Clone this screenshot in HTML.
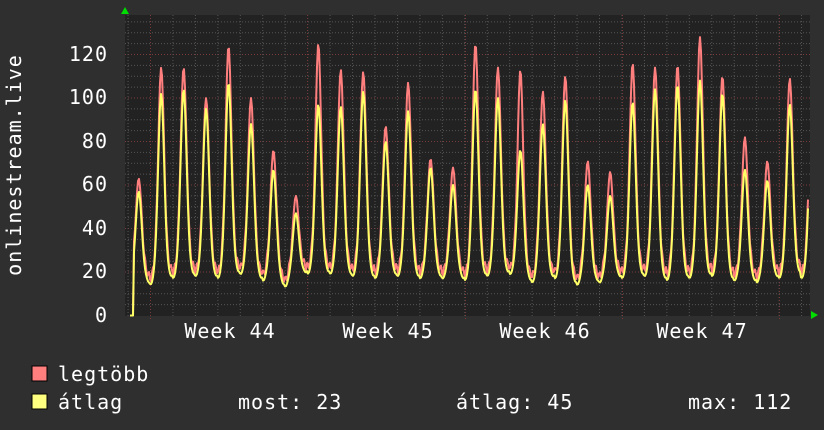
<!DOCTYPE html>
<html><head><meta charset="utf-8"><style>
html,body{margin:0;padding:0;background:#2f2f2f;width:824px;height:430px;overflow:hidden}
svg{display:block}
text{font-family:"DejaVu Sans Mono","Liberation Mono",monospace;fill:#fff;letter-spacing:1px}
</style></head><body>
<svg id="g" width="824" height="430" xmlns="http://www.w3.org/2000/svg">
<rect x="0" y="0" width="824" height="430" fill="#2f2f2f"/>
<rect x="125" y="15" width="685" height="301" fill="#222"/>
<g id="grid"></g>
<polyline id="red" fill="none" stroke="#ff7f7f" stroke-width="2" stroke-linejoin="round"/>
<polyline id="yel" fill="none" stroke="#ffff66" stroke-width="2" stroke-linejoin="round"/>
<polygon points="121,14 125,7 129,14" fill="#00dd00"/>
<polygon points="811,311 818,315 811,319" fill="#00dd00"/>
<g font-size="20" text-anchor="end">
<text x="108" y="61">120</text><text x="108" y="104">100</text><text x="108" y="148">80</text>
<text x="108" y="191">60</text><text x="108" y="235">40</text><text x="108" y="278">20</text>
<text x="108" y="322">0</text>
</g>
<text font-size="20" transform="translate(21,165) rotate(-90)" text-anchor="middle">onlinestream.live</text>
<g font-size="20" text-anchor="middle">
<text x="230" y="338">Week 44</text><text x="388" y="338">Week 45</text>
<text x="545" y="338">Week 46</text><text x="702" y="338">Week 47</text>
</g>
<rect x="32" y="366" width="15" height="15" fill="#ff7f7f" stroke="#000"/>
<rect x="32" y="394" width="15" height="15" fill="#ffff7f" stroke="#000"/>
<g font-size="20">
<text x="58" y="381">legtöbb</text>
<text x="58" y="409">átlag</text>
<text x="238" y="409">most: 23</text>
<text x="456" y="409">átlag: 45</text>
<text x="688" y="409">max: 112</text>
</g>
</svg>
<script>
var ns="http://www.w3.org/2000/svg",g=document.getElementById("grid");
function ln(x1,y1,x2,y2,c){var l=document.createElementNS(ns,"line");l.setAttribute("x1",x1);l.setAttribute("y1",y1);l.setAttribute("x2",x2);l.setAttribute("y2",y2);l.setAttribute("stroke",c);l.setAttribute("stroke-width","1");l.setAttribute("stroke-dasharray","1,2");g.appendChild(l);}
function Y(v){return 315.5-v*2.175;}
for(var v=5;v<=135;v+=5){ln(125,Y(v),810,Y(v),v%20==0?"#7a3a3a":"#555");}
for(var x=150.5-22.45*1;x<810;x+=22.45){if(x>125)ln(x,15,x,316,"#555");}
[150.5,307.5,465.5,622.5,779.5].forEach(function(x){ln(x,15,x,319,"#7a3a3a");});
var pk=[[60,57],[111,102],[111,104],[97,95],[121,107],[97,88],[73,67],[52,47],[122,97],[110,96],[109,103],[84,80],[104,94],[69,68],[65,60],[122,104],[111,100],[110,76],[100,88],[107,99],[68,60],[63,55],[113,98],[111,104],[112,106],[125,108],[107,102],[79,67],[68,62],[106,97]];
var bases=[18,17,20,21,20,22,19,16,22,22,21,20,21,20,20,19,21,22,18,20,17,18,20,21,19,20,21,19,18,20,22];
var r=[],y=[],x0=127.5,d=22.45;
for(var px=130;px<=808;px+=1){
 var t=(px-x0)/d, i=Math.floor(t), f=t-i;
 if(i>=pk.length)i=pk.length-1;
 var p=pk[i];
 var s=Math.exp(-Math.pow((f-0.5)/0.19,2));
 var s2=Math.exp(-Math.pow((f-0.5)/0.15,2));
 var bA=bases[i]*(1-f)+bases[i+1]*f-3*Math.exp(-Math.pow((f-0.05)/0.12,2))-2*Math.exp(-Math.pow((f-0.95)/0.1,2));
 var a=bA+(p[1]-bA)*s;
 var m=a+3+(p[0]-p[1])*s2+2*Math.sin(px*1.7)*(1-s);
 if(px<134){a=0;m=0;}
 if(m<a)m=a;
 y.push(px+","+Y(a).toFixed(1)); r.push(px+","+Y(m).toFixed(1));
}
document.getElementById("red").setAttribute("points",r.join(" "));
document.getElementById("yel").setAttribute("points",y.join(" "));
</script>
</body></html>
